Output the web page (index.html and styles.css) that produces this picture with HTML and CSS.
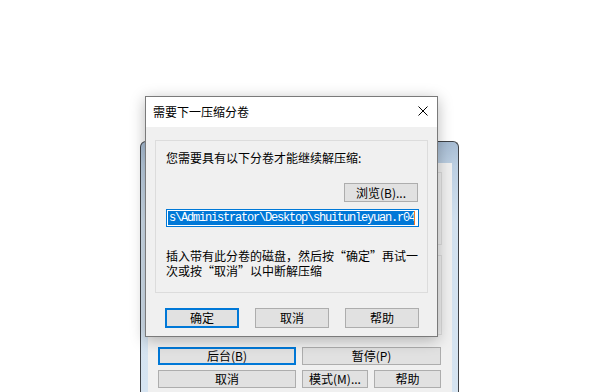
FILE: index.html
```html
<!DOCTYPE html>
<html lang="zh-CN">
<head>
<meta charset="utf-8">
<link rel="stylesheet" href="styles.css">
</head>
<body>
<div class="backwin">
  <div class="back-title"></div>
  <div class="back-content">
    <div class="panel panel1"></div>
    <div class="panel panel2"></div>
    <div class="back-row">
      <button class="btn focus w138">后台(B)</button>
      <button class="btn w139">暂停(P)</button>
    </div>
    <div class="back-row">
      <button class="btn w138">取消</button>
      <button class="btn w66">模式(M)...</button>
      <button class="btn w67">帮助</button>
    </div>
  </div>
</div>

<div class="dialog">
  <div class="titlebar">
    <span class="title">需要下一压缩分卷</span>
    <svg class="close" width="10" height="10" viewBox="0 0 10 10"><path d="M0.5 0.5L9.5 9.5M9.5 0.5L0.5 9.5" stroke="#000" stroke-width="1" fill="none"/></svg>
  </div>
  <div class="dlg-body">
    <div class="group">
      <div class="label">您需要具有以下分卷才能继续解压缩:</div>
      <div class="browse-row"><button class="btn browse">浏览(B)...</button></div>
      <div class="edit"><span class="sel">s\Administrator\Desktop\shuitunleyuan.r04</span><span class="caret"></span></div>
      <div class="hint"><div>插入带有此分卷的磁盘，然后按“确定”再试一</div><div>次或按“取消”以中断解压缩</div></div>
    </div>
    <div class="dlg-buttons">
      <button class="btn focus w74">确定</button>
      <button class="btn w74">取消</button>
      <button class="btn w74">帮助</button>
    </div>
  </div>
</div>
</body>
</html>
```
FILE: styles.css
```css
* { box-sizing: border-box; }
html, body { margin: 0; padding: 0; }
body {
  width: 595px;
  height: 392px;
  overflow: hidden;
  position: relative;
  background: #ffffff;
  font-family: "Noto Sans CJK SC", "Noto Sans", sans-serif;
  font-size: 12px;
  color: #000;
}

.btn {
  font-family: "Noto Sans CJK SC", "Noto Sans", sans-serif;
  font-size: 12px;
  line-height: 1;
  color: #000;
  background: #e1e1e1;
  border: 1px solid #adadad;
  padding: 0;
  margin: 0;
  display: flex;
  align-items: center;
  justify-content: center;
}
.btn.focus { border: 2px solid #0078d7; }

/* background window */
.backwin {
  position: absolute;
  left: 140px;
  top: 141px;
  width: 319px;
  height: 251px;
  border: 1px solid #3f4247;
  border-bottom: none;
  border-radius: 6px 6px 0 0;
  background: linear-gradient(180deg, #a7bcd3 0px, #bccfe2 24px, #d2e1ef 80px, #d6e4f1 100%);
  display: flex;
  flex-direction: column;
  overflow: hidden;
}
.back-title { height: 21px; flex: none; }
.back-content {
  margin: 0 6px 0 7px;
  flex: 1;
  background: #f0f0f0;
  padding: 9px 10px 0 10px;
  display: flex;
  flex-direction: column;
}
.panel {
  border: 1px solid #dcdcdc;
  flex: none;
}
.panel1 { height: 73px; }
.panel2 { height: 80px; margin-top: 10px; }
.back-row {
  display: flex;
  gap: 6px;
  height: 18px;
  flex: none;
}
.panel2 + .back-row { margin-top: 12px; }
.back-row + .back-row { margin-top: 5px; }
.w138 { width: 138px; }
.w139 { width: 139px; }
.w66 { width: 66px; }
.w67 { width: 67px; }

/* front dialog */
.dialog {
  position: absolute;
  left: 145px;
  top: 96px;
  width: 293px;
  height: 241px;
  border: 1px solid #7a7a7a;
  background: #f0f0f0;
  box-shadow: 0 3px 14px rgba(0, 0, 0, 0.28);
  display: flex;
  flex-direction: column;
}
.titlebar {
  height: 30px;
  background: #ffffff;
  flex: none;
  display: flex;
  align-items: center;
  justify-content: space-between;
  padding: 0 9px 0 7px;
}
.title { font-size: 12px; line-height: 16px; margin-top: -1px; }
.close { display: block; margin-top: -3px; }

.dlg-body {
  flex: 1;
  padding: 13px 9px 0 9px;
  display: flex;
  flex-direction: column;
}
.group {
  height: 153px;
  border: 1px solid #dcdcdc;
  padding: 9px 8px 0 10px;
  display: flex;
  flex-direction: column;
  flex: none;
}
.label { line-height: 16px; height: 16px; white-space: nowrap; }
.browse-row {
  display: flex;
  justify-content: flex-end;
  margin-top: 17px;
  padding-right: 1px;
}
.browse { width: 74px; height: 19px; }
.edit {
  margin-top: 7px;
  width: 253px;
  height: 18px;
  border: 1px solid #0078d7;
  background: #ffffff;
  padding: 1px 1px;
  display: flex;
  overflow: hidden;
}
.sel {
  background: #0078d7;
  color: #ffffff;
  font-family: "Liberation Mono", "DejaVu Sans Mono", monospace;
  font-size: 12px;
  letter-spacing: -1.2px;
  line-height: 14px;
  height: 14px;
  white-space: nowrap;
  width: 246px;
  overflow: hidden;
  padding-left: 1px;
}
.caret {
  width: 1px;
  height: 14px;
  background: #f07a2a;
  flex: none;
}
.hint {
  margin-top: 21px;
  line-height: 15px;
  white-space: nowrap;
  display: flex;
  flex-direction: column;
}
.hint div { height: 15px; }
.dlg-buttons {
  display: flex;
  gap: 16px;
  margin-top: 15px;
  padding-left: 10px;
}
.w74 { width: 74px; height: 20px; }
```
